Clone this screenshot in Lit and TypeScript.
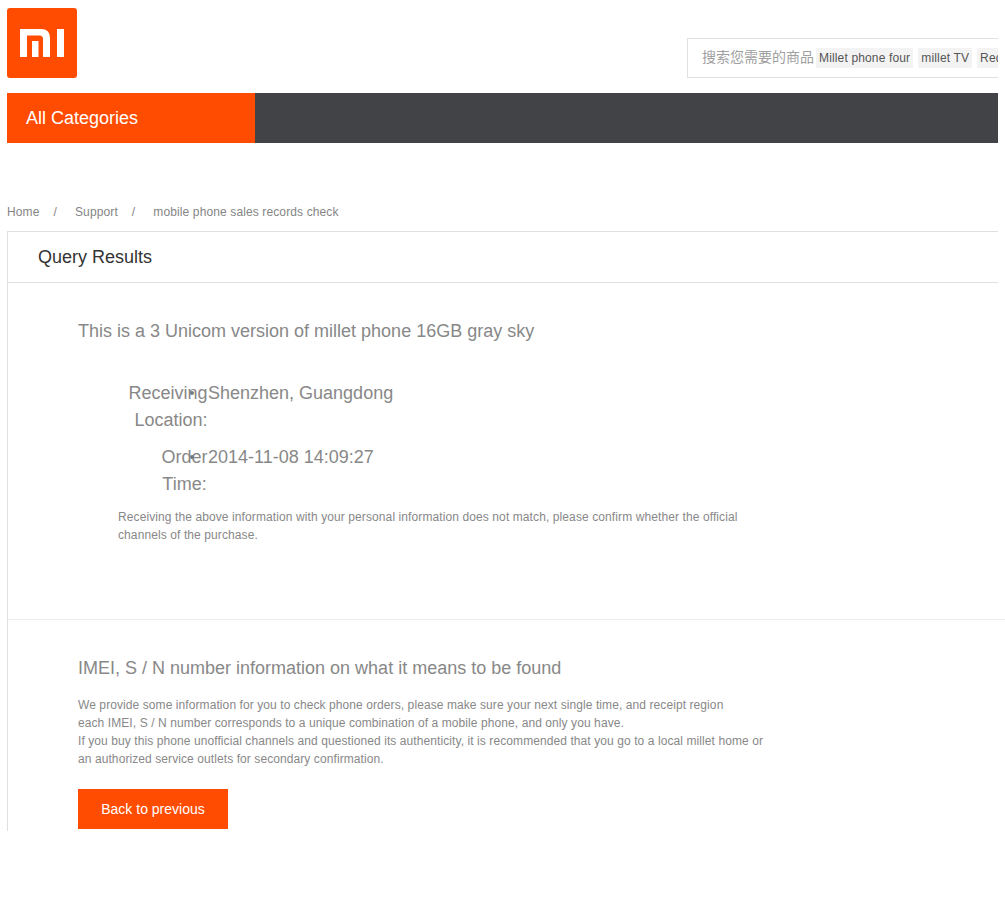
import { LitElement, html, css } from "lit";
import { customElement } from "lit/decorators.js";

@customElement("app-root")
export class AppRoot extends LitElement {
  static styles = css`
    :host {
      display: block;
      height: 906px;
      overflow: hidden;
      background: #fff;
      font-family: "Liberation Sans", Arial, "Noto Sans CJK SC", sans-serif;
      color: #757575;
    }

    .page {
      width: 991px;
      margin-left: 7px;
    }

    .header {
      display: flex;
      justify-content: space-between;
      align-items: flex-end;
      padding-top: 8px;
      height: 70px;
    }

    .logo {
      display: block;
      width: 70px;
      height: 70px;
      border-radius: 3px;
    }

    .search {
      display: flex;
      align-items: center;
      box-sizing: border-box;
      width: 311px;
      height: 40px;
      border: 1px solid #e0e0e0;
      border-right: none;
      padding-left: 14px;
      overflow: hidden;
      white-space: nowrap;
    }

    .placeholder {
      font-size: 14px;
      line-height: 18px;
      margin-top: -2px;
      color: #a0a0a0;
      margin-right: 2px;
    }

    .tag {
      flex: none;
      font-size: 12px;
      line-height: 20px;
      padding: 0 3px;
      margin-right: 5px;
      background: #f3f3f3;
      color: #555;
      letter-spacing: 0.15px;
    }

    .nav {
      display: flex;
      height: 50px;
      margin-top: 15px;
      background: #424347;
    }

    .all {
      width: 248px;
      padding-left: 19px;
      box-sizing: border-box;
      background: #ff4c00;
      color: #fff;
      font-size: 18px;
      line-height: 50px;
    }

    .crumbs {
      display: flex;
      margin-top: 62px;
      font-size: 12px;
      line-height: 14px;
      color: #858585;
      letter-spacing: 0.12px;
    }

    .sep {
      margin: 0 18px 0 14px;
    }

    .panel {
      width: 998px;
      height: 600px;
      margin-top: 12px;
      box-sizing: border-box;
      border-left: 1px solid #e0e0e0;
    }

    .top-rule {
      width: 990px;
      border-top: 1px solid #e0e0e0;
    }

    .title {
      width: 990px;
      height: 50px;
      box-sizing: content-box;
      border-bottom: 1px solid #e0e0e0;
      font-size: 18px;
      line-height: 51px;
      color: #333;
      text-indent: 30px;
    }

    .result {
      height: 337px;
      box-sizing: border-box;
      padding: 36px 0 0 70px;
      border-bottom: 1px solid #ececec;
    }

    h2 {
      margin: 0;
      font-size: 18px;
      font-weight: 400;
      line-height: 24px;
      color: #888;
    }

    .facts {
      display: grid;
      grid-template-columns: 130px 1fr;
      margin: 37px 0 0;
      font-size: 18px;
      line-height: 27px;
      color: #888;
    }

    .facts dt {
      position: relative;
      text-align: center;
      justify-self: end;
    }

    /* stray bullet that sits over the label text */
    .facts dt::after {
      content: "";
      position: absolute;
      right: 14px;
      top: 11px;
      width: 4px;
      height: 4px;
      border-radius: 50%;
      background: #6f7a80;
    }

    .facts dd {
      margin: 0;
    }

    .facts .r-label {
      width: 80px;
    }

    .facts .o-label {
      width: 47px;
    }

    .loc {
      display: inline-block;
      margin-left: 6px;
    }

    .facts .order {
      margin-top: 10px;
    }

    .note {
      width: 640px;
      margin: 10px 0 0 40px;
      font-size: 12px;
      line-height: 18px;
      color: #888;
      letter-spacing: 0.1px;
    }

    .info {
      padding: 36px 0 0 70px;
    }

    .info p {
      margin: 16px 0 0;
      font-size: 12px;
      line-height: 18px;
      color: #888;
      letter-spacing: 0.085px;
    }

    .back {
      width: 150px;
      height: 40px;
      margin-top: 21px;
      background: #ff4c00;
      color: #fff;
      font-size: 14px;
      line-height: 40px;
      text-align: center;
    }
  `;

  render() {
    return html`
      <div class="page">
        <div class="header">
          <svg class="logo" viewBox="0 0 70 70">
            <rect width="70" height="70" fill="#ff4c00" />
            <path
              d="M13 21H34Q43 21 43 30V49H36V31Q36 27.5 32.5 27.5H20V49H13ZM25 33H31.5V49H25ZM50 21H57V49H50Z"
              fill="#fff"
            />
          </svg>
          <div class="search">
            <span class="placeholder">搜索您需要的商品</span>
            <span class="tag">Millet phone four</span>
            <span class="tag">millet TV</span>
            <span class="tag">Red rice</span>
          </div>
        </div>
        <div class="nav"><div class="all">All Categories</div></div>
        <div class="crumbs">
          <span>Home</span><span class="sep">/</span>
          <span>Support</span><span class="sep">/</span>
          <span>mobile phone sales records check</span>
        </div>
        <div class="panel">
          <div class="top-rule"></div>
          <div class="title">Query Results</div>
          <div class="result">
            <h2>This is a 3 Unicom version of millet phone 16GB gray sky</h2>
            <dl class="facts">
              <dt class="r-label">Receiving <span class="loc">Location:</span></dt>
              <dd>Shenzhen, Guangdong</dd>
              <dt class="o-label order">Order Time:</dt>
              <dd class="order">2014-11-08 14:09:27</dd>
            </dl>
            <div class="note">
              Receiving the above information with your personal information
              does not match, please confirm whether the official channels of
              the purchase.
            </div>
          </div>
          <div class="info">
            <h2>IMEI, S / N number information on what it means to be found</h2>
            <p>
              We provide some information for you to check phone orders, please
              make sure your next single time, and receipt region<br />
              each IMEI, S / N number corresponds to a unique combination of a
              mobile phone, and only you have.<br />
              If you buy this phone unofficial channels and questioned its
              authenticity, it is recommended that you go to a local millet home
              or<br />
              an authorized service outlets for secondary confirmation.
            </p>
            <div class="back">Back to previous</div>
          </div>
        </div>
      </div>
    `;
  }
}
